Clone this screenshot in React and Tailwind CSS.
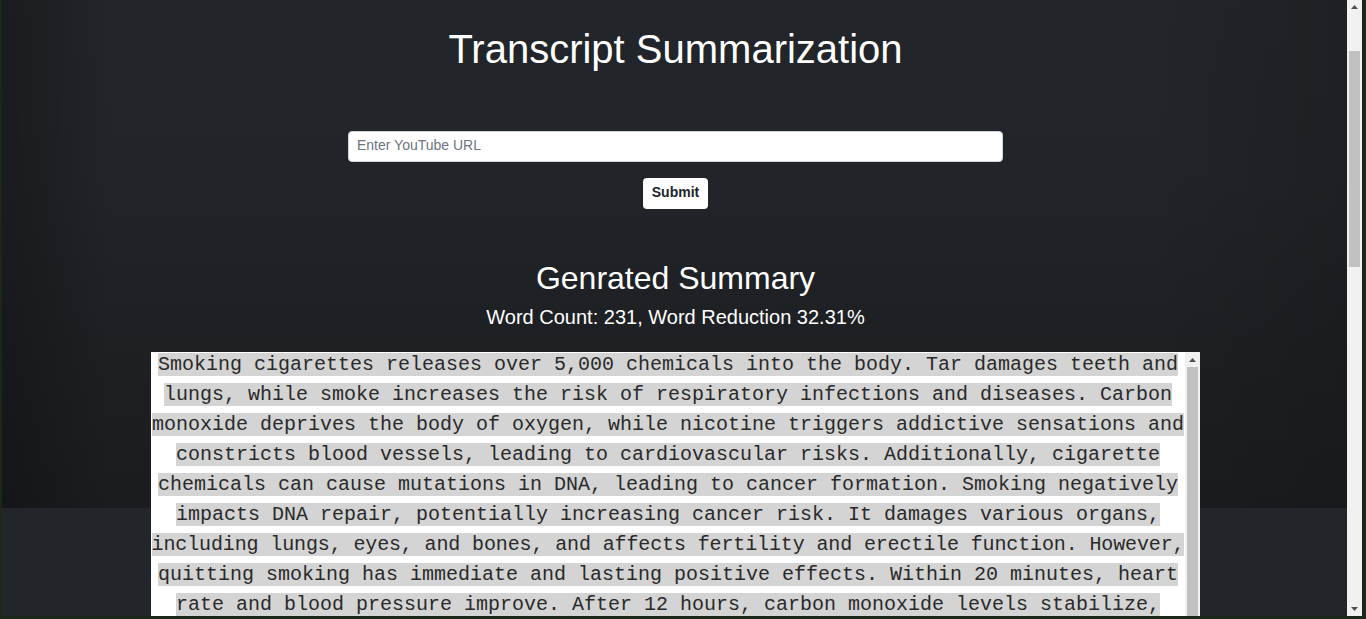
import React from "react";

const lines = [
  { t: "Smoking cigarettes releases over 5,000 chemicals into the body. Tar damages teeth and" },
  { t: "lungs, while smoke increases the risk of respiratory infections and diseases. Carbon" },
  { t: "monoxide deprives the body of oxygen, while nicotine triggers addictive sensations and" },
  { t: "constricts blood vessels, leading to cardiovascular risks. Additionally, cigarette" },
  { t: "chemicals can cause mutations in DNA, leading to cancer formation. Smoking negatively" },
  { t: "impacts DNA repair, potentially increasing cancer risk. It damages various organs," },
  { t: "including lungs, eyes, and bones, and affects fertility and erectile function. However,", tight: true },
  { t: "quitting smoking has immediate and lasting positive effects. Within 20 minutes, heart" },
  { t: "rate and blood pressure improve. After 12 hours, carbon monoxide levels stabilize," },
  { t: "and lung function begins to improve. Within a few weeks, circulation improves and" },
  { t: "coughing and shortness of breath decrease. After one year, the risk of heart disease" },
];

function ArrowUp() {
  return (
    <svg width="7" height="4" viewBox="0 0 7 4">
      <path d="M3.5 0 L7 4 L0 4 Z" fill="#505050" />
    </svg>
  );
}

function ArrowDown() {
  return (
    <svg width="7" height="4" viewBox="0 0 7 4">
      <path d="M0 0 L7 0 L3.5 4 Z" fill="#505050" />
    </svg>
  );
}

export default function App() {
  return (
    <div className="w-[1366px] h-[619px] flex overflow-hidden border-l-[2px] border-r-[4px] border-b-[3px] border-[#1b2717] bg-[#1b2717] font-['Liberation_Sans',Arial,sans-serif]">
      {/* page content */}
      <div className="flex-1 h-full overflow-hidden bg-[#222529]">
        <div className="h-full flex flex-col items-center pt-[25px] pl-[2px] bg-no-repeat bg-[length:100%_508px] bg-[image:linear-gradient(to_right,rgba(0,0,0,0.24),rgba(0,0,0,0)_110px,rgba(0,0,0,0)_85%,rgba(0,0,0,0.12)),linear-gradient(to_bottom,#222529,#212428_35%,#1a1c1f)]">
          <h1 className="text-[40px] leading-[48px] text-white">Transcript Summarization</h1>

          <input
            type="text"
            placeholder="Enter YouTube URL"
            className="mt-[58px] w-[655px] h-[31px] shrink-0 rounded-[4px] border border-[#ced4da] bg-white pl-[8px] pb-[4px] text-[14px] text-[#495057] placeholder:text-[#6c757d] outline-none"
          />

          <button className="mt-[16px] h-[31px] shrink-0 px-[9px] pb-[3px] rounded-[4px] bg-white text-[14px] font-bold text-[#212529] flex items-center">
            Submit
          </button>

          <h2 className="mt-[50px] text-[32px] leading-[38px] text-white">Genrated Summary</h2>
          <h5 className="mt-[8px] text-[20px] leading-[24px] text-white">
            Word Count: 231, Word Reduction 32.31%
          </h5>

          <div className="mt-[23px] w-[1049px] h-[420px] shrink-0 flex bg-white">
            <div className="flex-1 overflow-hidden text-center font-['Liberation_Mono','Courier_New',monospace] text-[20px] leading-[30px] text-[#2a2a2a]">
              <div className="-mt-[2px]">
                {lines.map((l, i) => (
                  <div key={i} className={l.tight ? "whitespace-nowrap tracking-[-0.13px]" : "whitespace-nowrap"}>
                    <span className="bg-[#d4d4d4]">{l.t}</span>
                  </div>
                ))}
              </div>
            </div>
            {/* textarea scrollbar */}
            <div className="w-[15px] h-full bg-[#f1f1f1] flex flex-col items-center">
              <div className="h-[15px] w-full flex items-center justify-center">
                <ArrowUp />
              </div>
              <div className="w-[11px] h-[360px] bg-[#c1c1c1]" />
            </div>
          </div>
        </div>
      </div>

      {/* page scrollbar */}
      <div className="w-[15px] h-full bg-[#f1f1f1] flex flex-col items-center">
        <div className="h-[17px] w-full flex items-start justify-center pt-[5px]">
          <ArrowUp />
        </div>
        <div className="mt-[34px] w-[11px] h-[216px] bg-[#c1c1c1]" />
        <div className="flex-1" />
        <div className="h-[17px] w-full flex items-end justify-center pb-[5px]">
          <ArrowDown />
        </div>
      </div>
    </div>
  );
}
